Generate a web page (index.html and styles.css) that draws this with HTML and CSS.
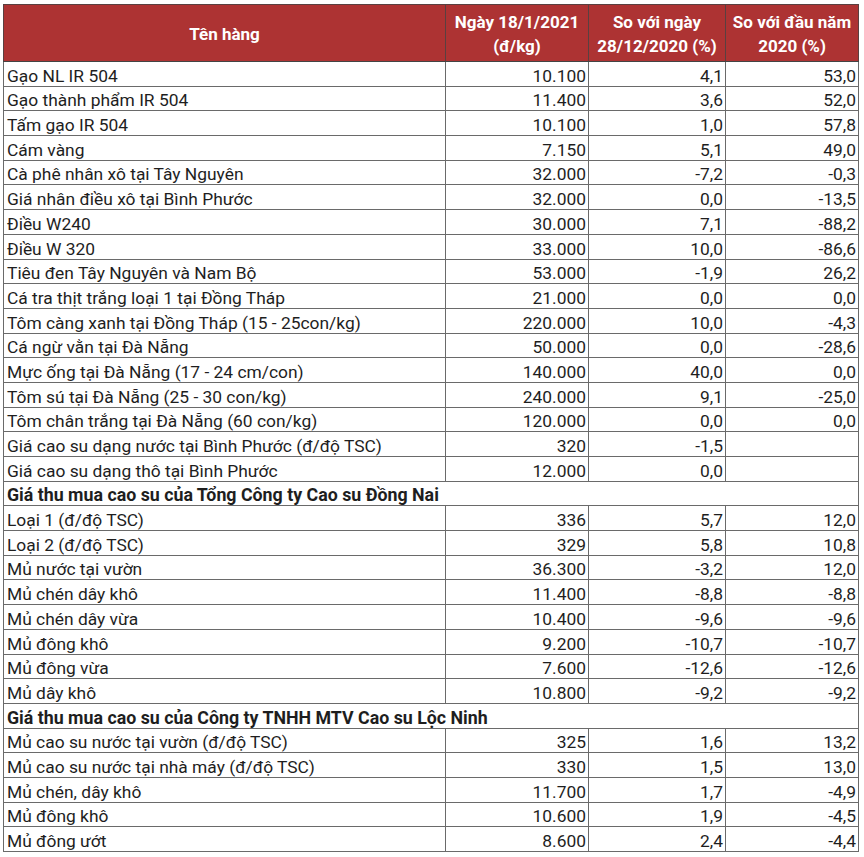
FILE: index.html
```html
<!DOCTYPE html>
<html lang="vi">
<head>
<meta charset="utf-8">
<link rel="stylesheet" href="styles.css">
</head>
<body>
<div class="wrap">
<table class="price">
<colgroup><col class="c1"><col class="c2"><col class="c3"><col class="c4"></colgroup>
<thead>
<tr><th>Tên hàng</th><th>Ngày 18/1/2021<br>(đ/kg)</th><th>So với ngày<br>28/12/2020 (%)</th><th>So với đầu năm<br>2020 (%)</th></tr>
</thead>
<tbody>
<tr><td>Gạo NL IR 504</td><td>10.100</td><td>4,1</td><td>53,0</td></tr>
<tr><td>Gạo thành phẩm IR 504</td><td>11.400</td><td>3,6</td><td>52,0</td></tr>
<tr><td>Tấm gạo IR 504</td><td>10.100</td><td>1,0</td><td>57,8</td></tr>
<tr><td>Cám vàng</td><td>7.150</td><td>5,1</td><td>49,0</td></tr>
<tr><td>Cà phê nhân xô tại Tây Nguyên</td><td>32.000</td><td>-7,2</td><td>-0,3</td></tr>
<tr><td>Giá nhân điều xô tại Bình Phước</td><td>32.000</td><td>0,0</td><td>-13,5</td></tr>
<tr><td>Điều W240</td><td>30.000</td><td>7,1</td><td>-88,2</td></tr>
<tr><td>Điều W 320</td><td>33.000</td><td>10,0</td><td>-86,6</td></tr>
<tr><td>Tiêu đen Tây Nguyên và Nam Bộ</td><td>53.000</td><td>-1,9</td><td>26,2</td></tr>
<tr><td>Cá tra thịt trắng loại 1 tại Đồng Tháp</td><td>21.000</td><td>0,0</td><td>0,0</td></tr>
<tr><td>Tôm càng xanh tại Đồng Tháp (15 - 25con/kg)</td><td>220.000</td><td>10,0</td><td>-4,3</td></tr>
<tr><td>Cá ngừ vằn tại Đà Nẵng</td><td>50.000</td><td>0,0</td><td>-28,6</td></tr>
<tr><td>Mực ống tại Đà Nẵng (17 - 24 cm/con)</td><td>140.000</td><td>40,0</td><td>0,0</td></tr>
<tr><td>Tôm sú tại Đà Nẵng (25 - 30 con/kg)</td><td>240.000</td><td>9,1</td><td>-25,0</td></tr>
<tr><td>Tôm chân trắng tại Đà Nẵng (60 con/kg)</td><td>120.000</td><td>0,0</td><td>0,0</td></tr>
<tr><td>Giá cao su dạng nước tại Bình Phước (đ/độ TSC)</td><td>320</td><td>-1,5</td><td></td></tr>
<tr><td>Giá cao su dạng thô tại Bình Phước</td><td>12.000</td><td>0,0</td><td></td></tr>
<tr class="group"><td colspan="4">Giá thu mua cao su của Tổng Công ty Cao su Đồng Nai</td></tr>
<tr><td>Loại 1 (đ/độ TSC)</td><td>336</td><td>5,7</td><td>12,0</td></tr>
<tr><td>Loại 2 (đ/độ TSC)</td><td>329</td><td>5,8</td><td>10,8</td></tr>
<tr><td>Mủ nước tại vườn</td><td>36.300</td><td>-3,2</td><td>12,0</td></tr>
<tr><td>Mủ chén dây khô</td><td>11.400</td><td>-8,8</td><td>-8,8</td></tr>
<tr><td>Mủ chén dây vừa</td><td>10.400</td><td>-9,6</td><td>-9,6</td></tr>
<tr><td>Mủ đông khô</td><td>9.200</td><td>-10,7</td><td>-10,7</td></tr>
<tr><td>Mủ đông vừa</td><td>7.600</td><td>-12,6</td><td>-12,6</td></tr>
<tr><td>Mủ dây khô</td><td>10.800</td><td>-9,2</td><td>-9,2</td></tr>
<tr class="group"><td colspan="4">Giá thu mua cao su của Công ty TNHH MTV Cao su Lộc Ninh</td></tr>
<tr><td>Mủ cao su nước tại vườn (đ/độ TSC)</td><td>325</td><td>1,6</td><td>13,2</td></tr>
<tr><td>Mủ cao su nước tại nhà máy (đ/độ TSC)</td><td>330</td><td>1,5</td><td>13,0</td></tr>
<tr><td>Mủ chén, dây khô</td><td>11.700</td><td>1,7</td><td>-4,9</td></tr>
<tr><td>Mủ đông khô</td><td>10.600</td><td>1,9</td><td>-4,5</td></tr>
<tr><td>Mủ đông ướt</td><td>8.600</td><td>2,4</td><td>-4,4</td></tr>
</tbody>
</table>
</div>
</body>
</html>
```

FILE: styles.css
```css
html, body {
  margin: 0;
  padding: 0;
  background: #ffffff;
}
.wrap {
  padding: 4px 0 0 3px;
}
.price {
  border-collapse: collapse;
  table-layout: fixed;
  width: 855px;
  font-family: Roboto, "Liberation Sans", sans-serif;
  font-size: 17.4px;
  color: #1e1e1e;
}
.c1 { width: 442px; }
.c2 { width: 143px; }
.c3 { width: 137px; }
.c4 { width: 133px; }
.price th {
  background: #ad3333;
  color: #ffffff;
  font-weight: 700;
  font-size: 17px;
  height: 54px;
  line-height: 24px;
  padding: 2px 2px 0;
  text-align: center;
  border: 1px solid #5a4040;
  border-bottom: 1px solid #444444;
}
.price td {
  height: 23.7px;
  line-height: 20px;
  padding: 0 2px 0 3px;
  border: 1px solid #6a6a6a;
  text-align: right;
  white-space: nowrap;
  overflow: hidden;
  vertical-align: bottom;
}
.price td:first-child {
  text-align: left;
}
.price .group td {
  font-weight: 700;
  font-size: 17.8px;
  text-align: left;
}
```
